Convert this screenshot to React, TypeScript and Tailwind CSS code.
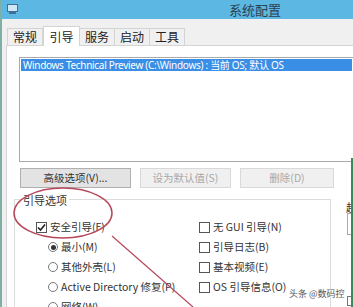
import React from 'react';

const font = { fontFamily: '"Microsoft YaHei", "Noto Sans CJK SC", "Noto Sans", sans-serif' };

const Tab = ({ label, active }: { label: string; active?: boolean }) =>
  active ? (
    <div className="h-[20px] w-[37px] -mb-px flex items-center justify-center bg-white border border-b-0 border-[#d4d4d4] text-[12px] text-[#222]">
      {label}
    </div>
  ) : (
    <div className="h-[17px] w-[36px] flex items-center justify-center bg-[#f0f0f0] border border-b-0 border-[#d4d4d4] -ml-px text-[12px] text-[#222]">
      {label}
    </div>
  );

const Btn = ({ label, w, disabled }: { label: string; w: string; disabled?: boolean }) => (
  <div
    className={`${w} h-[20px] flex items-center justify-center text-[10.5px] border ${
      disabled ? 'bg-[#f0f0f0] border-[#d9d9d9] text-[#a8a8a8]' : 'bg-[#e3e3e3] border-[#b0b0b0] text-[#333]'
    }`}
  >
    {label}
  </div>
);

const Check = ({ label, checked }: { label: string; checked?: boolean }) => (
  <div className="flex items-center h-[20px] text-[10.5px] text-[#333]">
    <div className="w-[11px] h-[11px] border border-[#555] bg-white mr-[3px] flex items-center justify-center">
      {checked && (
        <svg width="9" height="9" viewBox="0 0 9 9">
          <path d="M1 4.5 L3.5 7 L8 1.5" stroke="#222" strokeWidth="1.6" fill="none" />
        </svg>
      )}
    </div>
    {label}
  </div>
);

const Radio = ({ label, checked }: { label: string; checked?: boolean }) => (
  <div className="flex items-center h-[20px] text-[10.5px] text-[#333]">
    <div className="w-[10px] h-[10px] rounded-full border border-[#777] bg-white mr-[3px] flex items-center justify-center">
      {checked && <div className="w-[5px] h-[5px] rounded-full bg-[#333]" />}
    </div>
    {label}
  </div>
);

export default function App() {
  return (
    <div className="relative w-[353px] h-[307px] overflow-hidden bg-[#f0f0f0] border-l-2 border-[#7fb0a8]" style={font}>
      {/* title bar */}
      <div className="h-[19px] bg-[#5db7e3] flex items-center">
        <svg width="12" height="11" viewBox="0 0 12 11" className="ml-[5px]">
          <rect x="0.5" y="0.5" width="10" height="7" fill="#cfe6f5" stroke="#3d6f99" />
          <rect x="2" y="8" width="7" height="2" fill="#3d6f99" />
        </svg>
        <span className="ml-[210px] text-[13px] text-[#2c4150]">系统配置</span>
      </div>

      {/* tabs */}
      <div className="flex items-end h-[26px] pl-[6px] pt-[7px]">
        <Tab label="常规" />
        <Tab label="引导" active />
        <Tab label="服务" />
        <Tab label="启动" />
        <Tab label="工具" />
      </div>

      {/* panel */}
      <div className="ml-[4px] h-[262px] bg-white border-l border-t border-[#d4d4d4] pl-[12px] pt-[11px]">
        <div className="h-[105px] border border-[#a9a9a9] border-r-0 p-px">
          <div
            className="h-[12px] bg-[#3a8ee6] text-white text-[10px] tracking-[-0.3px] leading-[12px] pl-[2px] whitespace-nowrap"
            style={{ fontFamily: '"Segoe UI", "Noto Sans", "Noto Sans CJK SC", sans-serif' }}
          >
            Windows Technical Preview (C:\Windows) : 当前 OS; 默认 OS
          </div>
        </div>

        <div className="flex gap-[9px] mt-[6px] pl-[1px]">
          <Btn label="高级选项(V)..." w="w-[111px]" />
          <Btn label="设为默认值(S)" w="w-[91px]" disabled />
          <Btn label="删除(D)" w="w-[94px]" disabled />
        </div>

        <div className="relative mt-[11px] -ml-[5px] w-[317px] h-[120px] border border-[#dcdcdc]">
          <span className="absolute -top-[8px] left-[6px] bg-white px-[2px] text-[11px] text-[#333]">引导选项</span>
          <div className="flex pt-[17px]">
            <div className="pl-[21px] w-[184px]">
              <Check label="安全引导(F)" checked />
              <div className="pl-[12px]">
                <Radio label="最小(M)" checked />
                <Radio label="其他外壳(L)" />
                <Radio label="Active Directory 修复(P)" />
                <Radio label="网络(W)" />
              </div>
            </div>
            <div>
              <Check label="无 GUI 引导(N)" />
              <Check label="引导日志(B)" />
              <Check label="基本视频(E)" />
              <Check label="OS 引导信息(O)" />
            </div>
          </div>
        </div>
      </div>

      {/* right edge cut-off controls */}
      <span className="absolute left-[344px] top-[199px] text-[11px] text-[#333]">超</span>
      <div className="absolute left-[345px] top-[213px] w-[12px] h-[22px] border border-[#aaa] bg-white" />
      <div className="absolute left-[345px] top-[296px] w-[10px] h-[10px] border border-[#777] bg-white" />
      <div className="absolute right-0 top-[158px] w-[2px] h-[149px] bg-[#3b8a5a]" />

      {/* red annotation */}
      <svg className="absolute left-0 top-0 pointer-events-none" width="353" height="307">
        <ellipse cx="61" cy="213" rx="49" ry="25" fill="none" stroke="#b5485a" strokeWidth="1.5" />
        <line x1="110" y1="236" x2="191" y2="307" stroke="#b5485a" strokeWidth="1.2" />
      </svg>

      {/* watermark */}
      <span className="absolute left-[287px] top-[287px] text-[9px] text-[#555] [text-shadow:0_0_2px_#fff]">头条 @数码控</span>
    </div>
  );
}
